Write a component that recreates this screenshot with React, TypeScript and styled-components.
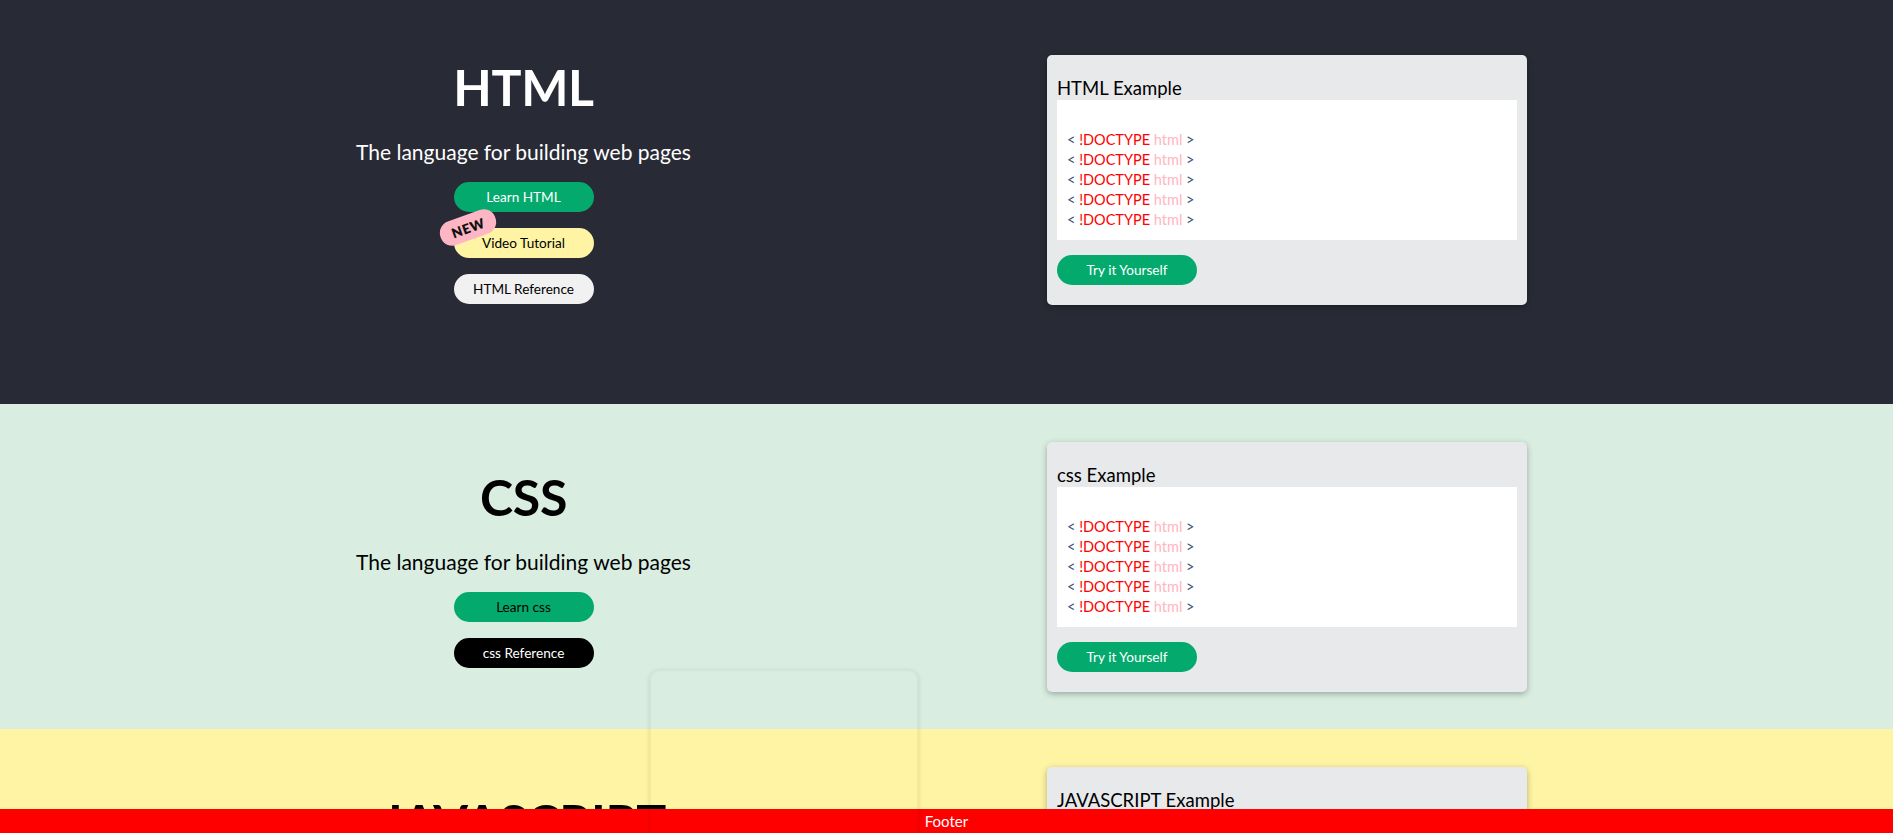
import React from "react";
import styled, { createGlobalStyle } from "styled-components";

const GlobalStyle = createGlobalStyle`
  html, body { margin: 0; padding: 0; }
  body {
    font-family: Lato, "Liberation Sans", sans-serif;
    color: #000;
  }
`;

const Page = styled.div`
  height: 100vh;
  overflow: hidden;
`;

const Section = styled.section<{ $bg: string; $fg: string; $pt: number; $pb: number }>`
  display: flex;
  align-items: center;
  background: ${(p) => p.$bg};
  color: ${(p) => p.$fg};
  padding: ${(p) => p.$pt}px 0 ${(p) => p.$pb}px;
`;

const Intro = styled.div`
  flex: 0 0 1047px;
  display: flex;
  flex-direction: column;
  align-items: center;
  text-align: center;
`;

const Title = styled.h1`
  margin: 0;
  font-size: 50px;
  line-height: 62px;
  font-weight: 700;
  letter-spacing: -0.3px;
`;

const Tagline = styled.p`
  margin: 20px 0 16px;
  font-size: 21px;
  line-height: 28px;
  font-weight: 400;
`;

const ButtonStack = styled.div`
  display: flex;
  flex-direction: column;
  gap: 16px;
`;

const PillButton = styled.a<{ $bg: string; $fg: string }>`
  position: relative;
  display: flex;
  align-items: center;
  justify-content: center;
  width: 140px;
  height: 30px;
  border-radius: 15px;
  background: ${(p) => p.$bg};
  color: ${(p) => p.$fg};
  font-size: 13.6px;
  text-decoration: none;
`;

const NewBadge = styled.span`
  position: absolute;
  left: -15px;
  top: -13px;
  width: 58px;
  height: 25px;
  border-radius: 12px;
  background: #ffb6c4;
  color: #111;
  font-size: 13.5px;
  font-weight: 800;
  letter-spacing: 0.6px;
  display: flex;
  align-items: center;
  justify-content: center;
  transform: rotate(-20deg);
`;

const Card = styled.div`
  width: 480px;
  box-sizing: border-box;
  padding: 21px 10px 20px;
  background: #e7e9eb;
  border-radius: 5px;
  box-shadow: 0 2px 6px rgba(0, 0, 0, 0.3);
  color: #000;
`;

const CardTitle = styled.h2`
  margin: 0;
  font-size: 18.5px;
  line-height: 24px;
  font-weight: 400;
`;

const CodeBox = styled.div`
  background: #fff;
  height: 140px;
  box-sizing: border-box;
  padding: 30px 10px 10px;
  font-size: 14.5px;
  line-height: 20px;
`;

const CodeLine = styled.div``;

const Bracket = styled.span`
  color: #3b4f78;
`;
const TagName = styled.span`
  color: #ff0000;
`;
const AttrName = styled.span`
  color: #ffb6c1;
`;

const TryButton = styled.a`
  display: flex;
  align-items: center;
  justify-content: center;
  margin-top: 15px;
  width: 140px;
  height: 30px;
  border-radius: 15px;
  background: #04aa6d;
  color: #fff;
  font-size: 13.6px;
  text-decoration: none;
`;

const Footer = styled.footer`
  position: fixed;
  left: 0;
  right: 0;
  bottom: 0;
  height: 24px;
  line-height: 24px;
  background: #ff0000;
  color: #fff;
  text-align: center;
  font-size: 15px;
  z-index: 5;
`;

const GhostPanel = styled.div`
  position: fixed;
  left: 650px;
  top: 670px;
  width: 268px;
  height: 260px;
  border-radius: 9px;
  box-shadow: 0 1px 5px rgba(0, 0, 0, 0.14), inset 0 0 3px rgba(0, 0, 0, 0.08);
  z-index: 10;
  pointer-events: none;
`;

type Btn = { label: string; bg: string; fg: string; badge?: boolean };
type Lang = {
  name: string;
  lower: string;
  bg: string;
  fg: string;
  pt: number;
  pb: number;
  buttons: Btn[];
};

const langs: Lang[] = [
  {
    name: "HTML",
    lower: "HTML",
    bg: "#282a35",
    fg: "#fff",
    pt: 55,
    pb: 99,
    buttons: [
      { label: "Learn HTML", bg: "#04aa6d", fg: "#fff" },
      { label: "Video Tutorial", bg: "#fff4a3", fg: "#000", badge: true },
      { label: "HTML Reference", bg: "#f1f1f1", fg: "#000" },
    ],
  },
  {
    name: "CSS",
    lower: "css",
    bg: "#d9eee1",
    fg: "#000",
    pt: 38,
    pb: 37,
    buttons: [
      { label: "Learn css", bg: "#04aa6d", fg: "#000" },
      { label: "css Reference", bg: "#000", fg: "#fff" },
    ],
  },
  {
    name: "JAVASCRIPT",
    lower: "JAVASCRIPT",
    bg: "#fff4a3",
    fg: "#000",
    pt: 38,
    pb: 37,
    buttons: [
      { label: "Learn JAVASCRIPT", bg: "#04aa6d", fg: "#000" },
      { label: "JAVASCRIPT Reference", bg: "#000", fg: "#fff" },
    ],
  },
];

function Example({ label }: { label: string }) {
  return (
    <Card>
      <CardTitle>{label} Example</CardTitle>
      <CodeBox>
        {[0, 1, 2, 3, 4].map((i) => (
          <CodeLine key={i}>
            <Bracket>&lt;</Bracket> <TagName>!DOCTYPE</TagName> <AttrName>html</AttrName>{" "}
            <Bracket>&gt;</Bracket>
          </CodeLine>
        ))}
      </CodeBox>
      <TryButton href="#">Try it Yourself</TryButton>
    </Card>
  );
}

export default function App() {
  return (
    <Page>
      <GlobalStyle />
      {langs.map((l) => (
        <Section key={l.name} $bg={l.bg} $fg={l.fg} $pt={l.pt} $pb={l.pb}>
          <Intro>
            <Title>{l.name}</Title>
            <Tagline>The language for building web pages</Tagline>
            <ButtonStack>
              {l.buttons.map((b) => (
                <PillButton key={b.label} href="#" $bg={b.bg} $fg={b.fg}>
                  {b.badge && <NewBadge>NEW</NewBadge>}
                  {b.label}
                </PillButton>
              ))}
            </ButtonStack>
          </Intro>
          <Example label={l.lower} />
        </Section>
      ))}
      <GhostPanel />
      <Footer>Footer</Footer>
    </Page>
  );
}
